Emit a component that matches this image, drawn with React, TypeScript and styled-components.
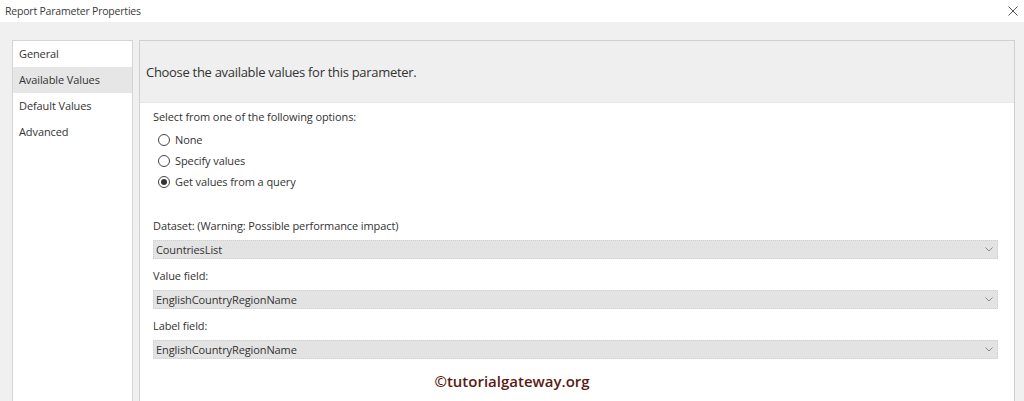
import styled, { createGlobalStyle } from 'styled-components'

const GlobalStyle = createGlobalStyle`
  html, body {
    margin: 0;
    padding: 0;
    background: #f0f0f0;
    font-family: 'Open Sans', 'Noto Sans', sans-serif;
    color: #333;
  }
`

const Window = styled.div`
  position: relative;
  display: flex;
  flex-direction: column;
  width: 1024px;
  height: 401px;
  overflow: hidden;
  background: #f0f0f0;
`

const TitleBar = styled.div`
  display: flex;
  align-items: center;
  justify-content: space-between;
  height: 22px;
  padding: 0 4px 0 5px;
  background: #ffffff;
  font-size: 10.5px;
  letter-spacing: -0.2px;
  color: #3a3a3a;
`

const CloseButton = styled.button`
  display: flex;
  align-items: center;
  justify-content: center;
  width: 14px;
  height: 14px;
  padding: 0;
  border: none;
  background: transparent;
  color: #555;

  svg {
    width: 10px;
    height: 10px;
  }
`

const Body = styled.div`
  flex: 1;
  display: flex;
  gap: 6px;
  padding: 18px 9px 0 12px;
  min-height: 0;
`

const Nav = styled.div`
  display: flex;
  flex-direction: column;
  width: 119px;
  border: 1px solid #d4d4d4;
  border-bottom: none;
  background: #ffffff;
`

const NavItem = styled.div<{ $active?: boolean }>`
  display: flex;
  align-items: center;
  height: 26px;
  margin-top: ${({ $active }) => ($active ? '0' : '0')};
  padding: 0 0 2px 6px;
  box-sizing: border-box;
  font-size: 11px;
  letter-spacing: -0.1px;
  color: #333;
  background: ${({ $active }) => ($active ? '#e6e6e6' : 'transparent')};
`

const Main = styled.div`
  flex: 1;
  display: flex;
  flex-direction: column;
  border: 1px solid #d0d0d0;
  border-bottom: none;
  background: #ffffff;
`

const Header = styled.div`
  display: flex;
  align-items: center;
  height: 61px;
  padding-left: 6px;
  background: #efefef;
  border-bottom: 1px dotted #e2e2e2;
  font-size: 13px;
  letter-spacing: -0.3px;
  color: #333;
`

const Content = styled.div`
  display: flex;
  flex-direction: column;
  padding: 7px 16px 0 13px;
`

const Label = styled.div`
  height: 14px;
  line-height: 14px;
  font-size: 11px;
  letter-spacing: -0.1px;
  color: #333;
`

const RadioList = styled.div`
  display: flex;
  flex-direction: column;
  margin-top: 5px;
  padding-left: 5px;
`

const RadioRow = styled.label`
  display: flex;
  align-items: center;
  gap: 5px;
  height: 21px;
  font-size: 11px;
  letter-spacing: -0.1px;
  color: #333;
`

const RadioCircle = styled.span<{ $checked?: boolean }>`
  position: relative;
  width: 10px;
  height: 10px;
  border: 1px solid #444;
  border-radius: 50%;
  background: #fff;

  &::after {
    content: '';
    display: ${({ $checked }) => ($checked ? 'block' : 'none')};
    position: absolute;
    top: 2px;
    left: 2px;
    width: 6px;
    height: 6px;
    border-radius: 50%;
    background: #333;
  }
`

const Field = styled.div<{ $first?: boolean }>`
  display: flex;
  flex-direction: column;
  gap: 7px;
  margin-top: ${({ $first }) => ($first ? '27px' : '10px')};
`

const Select = styled.div`
  display: flex;
  align-items: center;
  justify-content: space-between;
  height: 17px;
  padding: 0 4px 0 2px;
  background: #e3e3e3;
  border: 1px dotted #cfcfcf;
  font-size: 11px;
  letter-spacing: -0.1px;
  color: #333;

  svg {
    width: 8px;
    height: 5px;
  }
`

const Watermark = styled.div`
  position: absolute;
  left: 0;
  right: 0;
  top: 371px;
  text-align: center;
  font-family: 'Open Sans', 'Noto Sans', sans-serif;
  font-weight: 600;
  font-size: 15px;
  color: #5b1a12;
`

const Chevron = () => (
  <svg viewBox="0 0 8 5" fill="none" stroke="#8a8a8a" strokeWidth={1}>
    <path d="M0.5 0.5L4 4L7.5 0.5" />
  </svg>
)

const navItems = ['General', 'Available Values', 'Default Values', 'Advanced']
const options = ['None', 'Specify values', 'Get values from a query']
const fields = [
  { label: 'Dataset: (Warning: Possible performance impact)', value: 'CountriesList' },
  { label: 'Value field:', value: 'EnglishCountryRegionName' },
  { label: 'Label field:', value: 'EnglishCountryRegionName' },
]

export default function App() {
  return (
    <>
      <GlobalStyle />
      <Window>
        <TitleBar>
          <span>Report Parameter Properties</span>
          <CloseButton>
            <svg viewBox="0 0 10 10" fill="none" stroke="currentColor" strokeWidth={1}>
              <path d="M0.5 0.5L9.5 9.5M9.5 0.5L0.5 9.5" />
            </svg>
          </CloseButton>
        </TitleBar>
        <Body>
          <Nav>
            {navItems.map((item) => (
              <NavItem key={item} $active={item === 'Available Values'}>
                {item}
              </NavItem>
            ))}
          </Nav>
          <Main>
            <Header>Choose the available values for this parameter.</Header>
            <Content>
              <Label>Select from one of the following options:</Label>
              <RadioList>
                {options.map((opt, i) => (
                  <RadioRow key={opt}>
                    <RadioCircle $checked={i === 2} />
                    {opt}
                  </RadioRow>
                ))}
              </RadioList>
              {fields.map((f, i) => (
                <Field key={f.label} $first={i === 0}>
                  <Label>{f.label}</Label>
                  <Select>
                    <span>{f.value}</span>
                    <Chevron />
                  </Select>
                </Field>
              ))}
            </Content>
          </Main>
        </Body>
        <Watermark>©tutorialgateway.org</Watermark>
      </Window>
    </>
  )
}
